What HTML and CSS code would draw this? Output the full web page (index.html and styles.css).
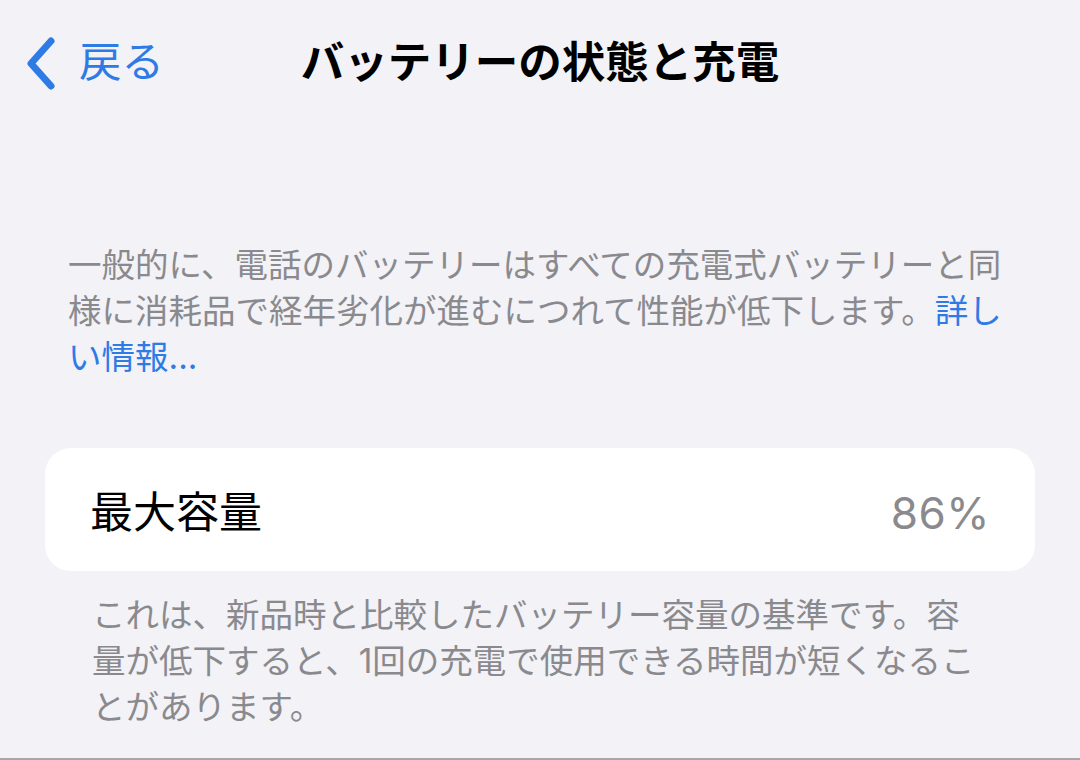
FILE: index.html
```html
<!DOCTYPE html>
<html lang="ja">
<head>
<meta charset="utf-8">
<title>バッテリーの状態と充電</title>
<link rel="stylesheet" href="styles.css">
</head>
<body>
<div class="page">
  <header class="nav">
    <a class="back" href="#">
      <svg class="chev" width="34" height="56" viewBox="0 0 34 56" aria-hidden="true">
        <path d="M27 5 L7 27.5 L27 50" fill="none" stroke="currentColor" stroke-width="7" stroke-linecap="round" stroke-linejoin="round"/>
      </svg>
      <span class="back-label">戻る</span>
    </a>
    <h1 class="title">バッテリーの状態と充電</h1>
    <div class="nav-spacer"></div>
  </header>

  <p class="intro">一般的に、電話のバッテリーはすべての充電式バッテリーと同様に消耗品で経年劣化が進むにつれて性能が低下します。<a class="link" href="#">詳しい情報...</a></p>

  <section class="card">
    <div class="row">
      <span class="row-label">最大容量</span>
      <span class="row-value">86%</span>
    </div>
  </section>

  <p class="footnote">これは、新品時と比較したバッテリー容量の基準です。容量が低下すると、1回の充電で使用できる時間が短くなることがあります。</p>
</div>
</body>
</html>
```

FILE: styles.css
```css
html, body {
  margin: 0;
  padding: 0;
  background: #f2f2f7;
}

body {
  font-family: "Inter", "Noto Sans CJK JP", sans-serif;
  color: #000;
}

.page {
  width: 1080px;
  height: 760px;
  box-sizing: border-box;
  border-bottom: 2px solid #a7a7a9;
  overflow: hidden;
}

.nav {
  height: 128px;
  display: grid;
  grid-template-columns: 1fr auto 1fr;
  align-items: center;
}

.back {
  display: flex;
  align-items: center;
  gap: 21px;
  padding-left: 24px;
  color: #2f7be6;
  text-decoration: none;
}

.chev {
  display: block;
}

.back-label {
  font-size: 42.5px;
  line-height: 1;
  margin-top: -4px;
}

.title {
  margin: 0;
  margin-top: -2px;
  font-size: 43.5px;
  font-weight: 700;
  line-height: 1;
  white-space: nowrap;
}

.intro {
  margin: 114px 0 0 0;
  padding: 0 68px;
  font-size: 33.5px;
  line-height: 46px;
  color: #8a8a8e;
}

.link {
  color: #2f7be6;
  text-decoration: none;
}

.card {
  margin: 68px 45px 0 45px;
  height: 123px;
  background: #ffffff;
  border-radius: 26px;
  display: flex;
  flex-direction: column;
  justify-content: center;
}

.row {
  display: flex;
  justify-content: space-between;
  align-items: center;
  padding: 0 45px;
  margin-top: 6px;
}

.row-label {
  font-size: 43px;
  line-height: 1;
}

.row-value {
  font-size: 44px;
  line-height: 1;
  color: #8a8a8e;
  letter-spacing: 0.5px;
}

.footnote {
  margin: 21px 0 0 0;
  padding: 0 90px 0 92px;
  font-size: 33.5px;
  line-height: 46px;
  color: #8a8a8e;
}
```
